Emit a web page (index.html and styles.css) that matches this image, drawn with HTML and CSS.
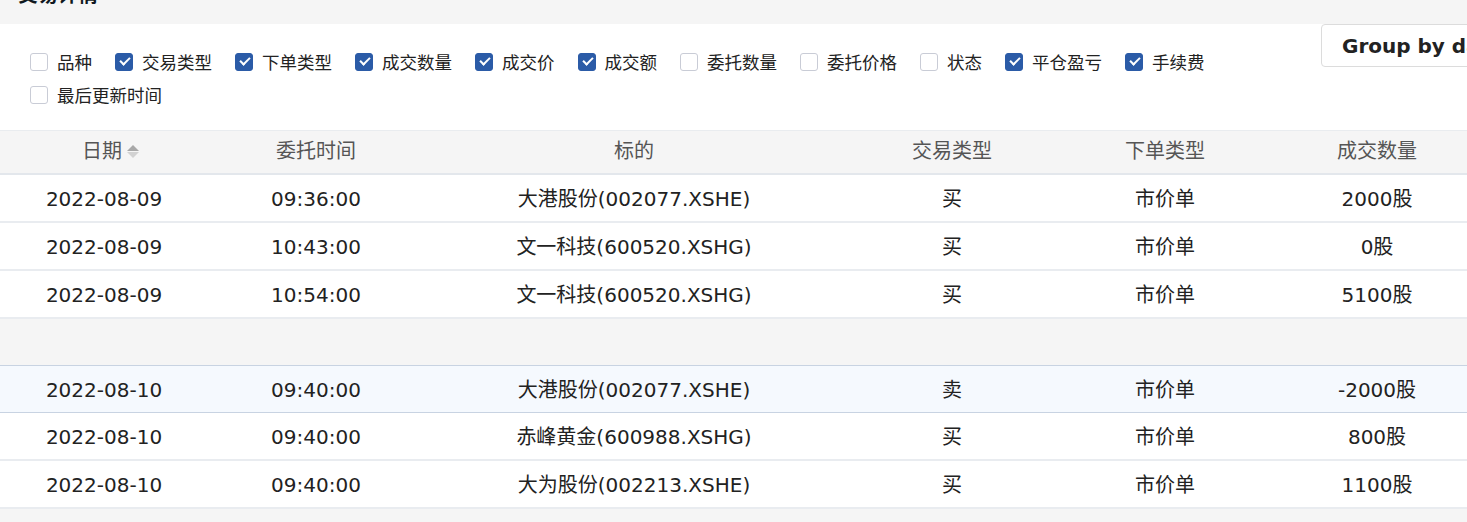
FILE: index.html
```html
<!DOCTYPE html>
<html lang="zh-CN">

<head>
    <meta charset="UTF-8">
    <meta name="viewport" content="width=device-width, initial-scale=1.0">
    <title>交易详情</title>
    <link rel="stylesheet" href="styles.css">
</head>

<body>
    <div class="page-head">
        <h2 class="page-title">交易详情</h2>
    </div>

    <div class="toolbar">
        <div class="col-picker">
            <label class="col-opt"><span class="box"></span>品种</label>
            <label class="col-opt"><span class="box checked"></span>交易类型</label>
            <label class="col-opt"><span class="box checked"></span>下单类型</label>
            <label class="col-opt"><span class="box checked"></span>成交数量</label>
            <label class="col-opt"><span class="box checked"></span>成交价</label>
            <label class="col-opt"><span class="box checked"></span>成交额</label>
            <label class="col-opt"><span class="box"></span>委托数量</label>
            <label class="col-opt"><span class="box"></span>委托价格</label>
            <label class="col-opt"><span class="box"></span>状态</label>
            <label class="col-opt"><span class="box checked"></span>平仓盈亏</label>
            <label class="col-opt"><span class="box checked"></span>手续费</label>
            <label class="col-opt"><span class="box"></span>最后更新时间</label>
        </div>
        <button class="group-btn">Group by date</button>
    </div>

    <table class="trades">
        <colgroup>
            <col style="width: 208px">
            <col style="width: 216px">
            <col style="width: 420px">
            <col style="width: 216px">
            <col style="width: 210px">
            <col style="width: 214px">
            <col style="width: 200px">
            <col style="width: 200px">
            <col style="width: 200px">
            <col style="width: 200px">
        </colgroup>
        <thead>
            <tr>
                <th>日期<span class="sort"></span></th>
                <th>委托时间</th>
                <th>标的</th>
                <th>交易类型</th>
                <th>下单类型</th>
                <th>成交数量</th>
                <th>成交价</th>
                <th>成交额</th>
                <th>平仓盈亏</th>
                <th>手续费</th>
            </tr>
        </thead>
        <tbody>
            <tr>
                <td>2022-08-09</td>
                <td>09:36:00</td>
                <td>大港股份(002077.XSHE)</td>
                <td>买</td>
                <td>市价单</td>
                <td>2000股</td>
                <td>9.52</td>
                <td>19040.00</td>
                <td>0.00</td>
                <td>5.00</td>
            </tr>
            <tr>
                <td>2022-08-09</td>
                <td>10:43:00</td>
                <td>文一科技(600520.XSHG)</td>
                <td>买</td>
                <td>市价单</td>
                <td>0股</td>
                <td>0.00</td>
                <td>0.00</td>
                <td>0.00</td>
                <td>0.00</td>
            </tr>
            <tr>
                <td>2022-08-09</td>
                <td>10:54:00</td>
                <td>文一科技(600520.XSHG)</td>
                <td>买</td>
                <td>市价单</td>
                <td>5100股</td>
                <td>27.61</td>
                <td>140811.00</td>
                <td>0.00</td>
                <td>42.24</td>
            </tr>
            <tr class="group-gap">
                <td colspan="10"></td>
            </tr>
            <tr class="hover">
                <td>2022-08-10</td>
                <td>09:40:00</td>
                <td>大港股份(002077.XSHE)</td>
                <td>卖</td>
                <td>市价单</td>
                <td>-2000股</td>
                <td>10.47</td>
                <td>20940.00</td>
                <td>1900.00</td>
                <td>26.22</td>
            </tr>
            <tr>
                <td>2022-08-10</td>
                <td>09:40:00</td>
                <td>赤峰黄金(600988.XSHG)</td>
                <td>买</td>
                <td>市价单</td>
                <td>800股</td>
                <td>20.35</td>
                <td>16280.00</td>
                <td>0.00</td>
                <td>5.00</td>
            </tr>
            <tr>
                <td>2022-08-10</td>
                <td>09:40:00</td>
                <td>大为股份(002213.XSHE)</td>
                <td>买</td>
                <td>市价单</td>
                <td>1100股</td>
                <td>17.80</td>
                <td>19580.00</td>
                <td>0.00</td>
                <td>5.87</td>
            </tr>
            <tr class="group-gap">
                <td colspan="10"></td>
            </tr>
        </tbody>
    </table>
</body>

</html>
```

FILE: styles.css
```css
html,
body {
    margin: 0;
    overflow: hidden;
    background: #fff;
}

body {
    font-family: "DejaVu Sans", "Noto Sans CJK SC", sans-serif;
    color: #222;
}

.page-head {
    height: 24px;
    background: #f5f5f5;
    overflow: hidden;
}

.page-title {
    margin: -17px 0 0 18px;
    font-size: 20px;
    line-height: 24px;
    font-weight: bold;
    color: #101820;
}

.toolbar {
    display: flex;
    align-items: flex-start;
    padding-left: 30px;
    width: 1600px;
}

.col-picker {
    width: 1270px;
    flex-shrink: 0;
    display: flex;
    flex-wrap: wrap;
    column-gap: 23px;
    row-gap: 0;
    padding-top: 21px;
}

.col-opt {
    display: flex;
    align-items: center;
    height: 33px;
    line-height: 1;
    font-family: "Noto Sans CJK SC", sans-serif;
    font-size: 17.5px;
    color: #222;
    cursor: pointer;
}

.box {
    width: 18px;
    height: 18px;
    box-sizing: border-box;
    border: 1px solid #c9ccd6;
    border-radius: 3px;
    margin-right: 9px;
    position: relative;
    background: #fff;
}

.box.checked {
    background: #2b5ba7;
    border-color: #2b5ba7;
}

.box.checked::after {
    content: "";
    position: absolute;
    left: 4px;
    top: 3px;
    width: 8px;
    height: 4px;
    border-left: 2px solid #fff;
    border-bottom: 2px solid #fff;
    transform: rotate(-45deg);
}

.group-btn {
    flex-shrink: 0;
    margin-left: 21px;
    height: 43px;
    padding: 0 20px;
    border: 1px solid #dcdcdc;
    border-radius: 4px;
    background: #fff;
    font-family: "DejaVu Sans", sans-serif;
    font-size: 20px;
    font-weight: bold;
    color: #222;
    white-space: nowrap;
}

.trades {
    margin-top: 19px;
    border-collapse: collapse;
    table-layout: fixed;
    width: 2284px;
    font-size: 20px;
}

.trades th {
    padding: 0 0 2px;
    line-height: 40px;
    background: #f5f5f5;
    color: #555;
    font-weight: normal;
    border-top: 1px solid #e9ecef;
    border-bottom: 2px solid #e3e7ec;
}

.trades td {
    padding: 2px 0 0;
    line-height: 44px;
    text-align: center;
    border-bottom: 2px solid #e9ecf0;
    white-space: nowrap;
}

.sort {
    display: inline-block;
    vertical-align: middle;
    margin-left: 5px;
    margin-right: -13px;
    margin-top: -3px;
    width: 12px;
    height: 13px;
    position: relative;
}

.sort::before,
.sort::after {
    content: "";
    position: absolute;
    left: 0;
    border-left: 6px solid transparent;
    border-right: 6px solid transparent;
}

.sort::before {
    top: 0;
    border-bottom: 6px solid #a8a8a8;
}

.sort::after {
    bottom: 0;
    border-top: 6px solid #d2d2d2;
}

.trades tr.group-gap td {
    padding: 0;
    height: 46px;
    line-height: 46px;
    background: #f5f5f5;
    border-bottom: none;
}

.trades tr.hover td {
    background: #f5f9fe;
    border-top: 1px solid #c8d3e2;
    border-bottom: 1px solid #c8d3e2;
}
```
